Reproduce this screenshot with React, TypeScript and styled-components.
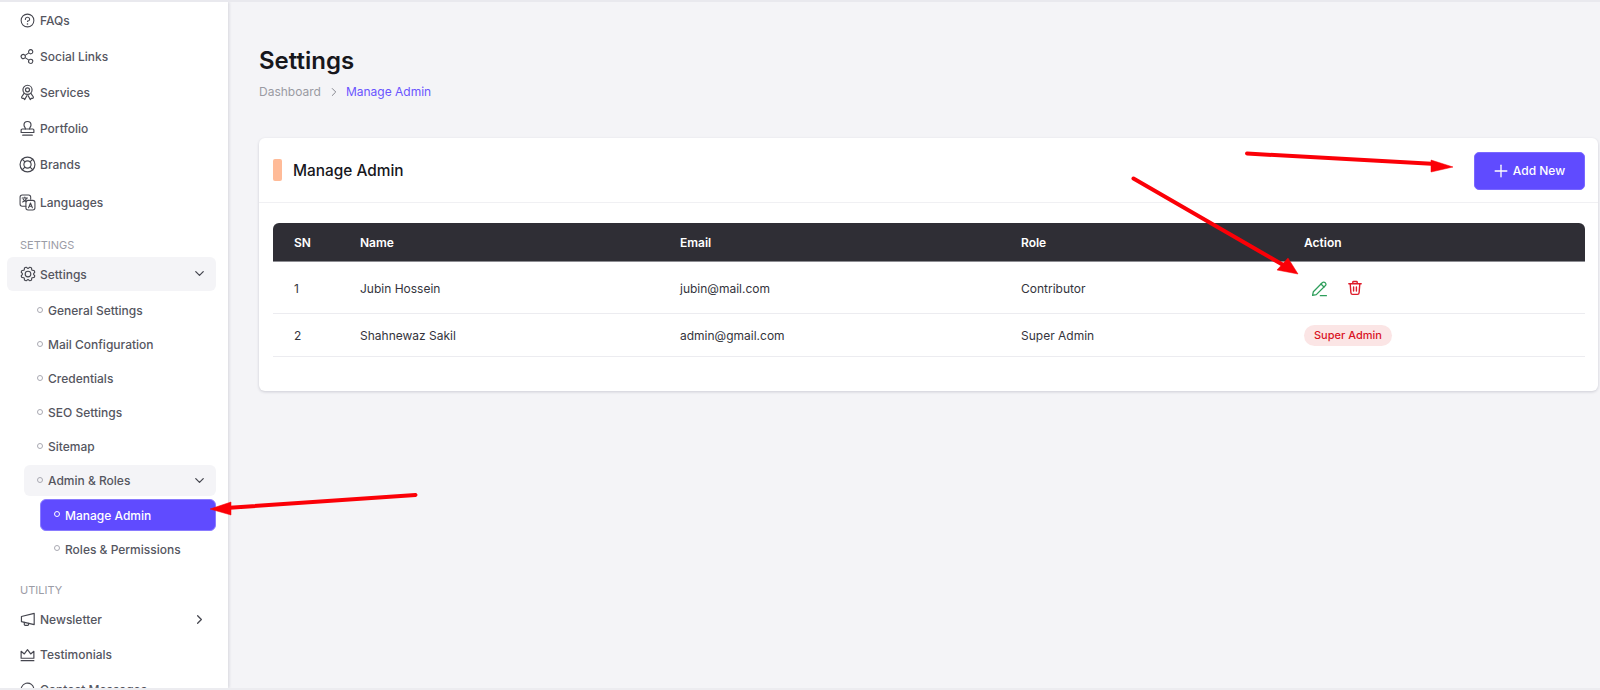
import React from "react";
import styled, { createGlobalStyle } from "styled-components";
import { ChevronDown, ChevronRight, Plus } from "lucide-react";
import { PiQuestion, PiShareNetwork, PiGear, PiChatCircleDots } from "react-icons/pi";

const Global = createGlobalStyle`
  html, body { margin: 0; padding: 0; height: 690px; overflow: hidden; background: #f4f4f7; }
  * { box-sizing: border-box; }
  body { font-family: Inter, "Noto Sans", sans-serif; }
`;

const Shell = styled.div`
  position: relative;
  display: flex;
  width: 1600px;
  height: 690px;
  overflow: hidden;
  border-top: 2px solid #e9e9ee;
  border-bottom: 2px solid #ececf0;
`;
const Sidebar = styled.aside`
  width: 228px;
  flex: none;
  background: #fff;
  box-shadow: 1px 0 3px rgba(30, 30, 60, 0.14);
  padding: 0 12px 0 7px;
  overflow: hidden;
  z-index: 1;
`;
const NavItem = styled.div<{ $h?: number; $pt?: number; $mt?: number }>`
  display: flex;
  align-items: center;
  height: ${(p) => p.$h ?? 36.2}px;
  margin-top: ${(p) => p.$mt ?? 0}px;
  padding: ${(p) => p.$pt ?? 0}px 9px 0 12px;
  gap: 4px;
  font-size: 12px;
  font-weight: 500;
  color: #55565f;
  svg { flex: none; }
`;
const OpenItem = styled(NavItem)`
  background: #f4f4f7;
  border-radius: 6px;
  height: 34px;
  margin-top: 5px;
  gap: 3px;
`;
const OpenLabel = styled.span`
  padding-top: 2px;
`;
const Grow = styled.span`
  flex: 1;
`;
const SectionTitle = styled.div<{ $mt: number }>`
  margin-top: ${(p) => p.$mt}px;
  padding-left: 13px;
  font-size: 11px;
  line-height: 14px;
  color: #9b9ca6;
`;
const SubList = styled.div<{ $ml: number; $mt?: number }>`
  margin-left: ${(p) => p.$ml}px;
  margin-top: ${(p) => p.$mt ?? 0}px;
  display: flex;
  flex-direction: column;
`;
const SubItem = styled.div`
  display: flex;
  align-items: center;
  gap: 5px;
  height: 34px;
  padding: 1px 0 0 13px;
  font-size: 12px;
  font-weight: 500;
  color: #55565f;
`;
const LastSubItem = styled(SubItem)`
  margin-top: 1px;
  padding-left: 14px;
`;
const SubOpen = styled(SubItem)`
  height: 31px;
  padding-right: 9px;
  background: #f4f4f7;
  border-radius: 6px;
`;
const SubActive = styled(SubItem)`
  height: 32px;
  background: #604bff;
  border: 1px solid #8a7bff;
  border-radius: 6px;
  color: #fff;
`;
const Dot = styled.i<{ $light?: boolean }>`
  width: 6px;
  height: 6px;
  flex: none;
  border-radius: 50%;
  border: 1px solid ${(p) => (p.$light ? "#fff" : "#a9a9b2")};
  margin-top: -2px;
`;
const Main = styled.main`
  flex: 1;
  min-width: 0;
  padding: 44px 2px 0 31px;
`;
const PageTitle = styled.h1`
  margin: 0;
  font-size: 24px;
  line-height: 30px;
  font-weight: 600;
  color: #17171c;
`;
const Crumbs = styled.div`
  display: flex;
  align-items: center;
  gap: 6px;
  margin-top: 7px;
  font-size: 12px;
  line-height: 18px;
  color: #9a9ba3;
`;
const CrumbNow = styled.span`
  color: #6a55ff;
  margin-left: -1px;
`;
const Card = styled.section`
  margin-top: 37px;
  height: 253px;
  background: #fff;
  border-radius: 6px;
  box-shadow: 0 1px 3px rgba(30, 30, 60, 0.18);
`;
const CardHead = styled.header`
  display: flex;
  align-items: center;
  height: 65px;
  padding: 0 13px 0 14px;
  border-bottom: 1px solid #f0f0f3;
`;
const Marker = styled.span`
  width: 9px;
  height: 22px;
  background: #ffbb98;
  border-radius: 2px;
  margin-right: 11px;
`;
const CardTitle = styled.h2`
  margin: 0;
  flex: 1;
  font-size: 15.4px;
  font-weight: 500;
  color: #17171c;
`;
const AddButton = styled.button`
  display: flex;
  align-items: center;
  justify-content: center;
  gap: 2px;
  width: 111px;
  height: 38px;
  margin-top: 1px;
  padding: 0 3px 0 0;
  border: 1px solid #7a68ff;
  border-radius: 5px;
  background: #604bff;
  color: #fff;
  font: 500 12px Inter, sans-serif;
`;
const TableWrap = styled.div`
  margin: 20px 13px 0 14px;
`;
const Row = styled.div<{ $h: number }>`
  display: grid;
  grid-template-columns: 66px 320px 341px 283px 1fr;
  align-items: center;
  height: ${(p) => p.$h}px;
  padding: 1px 0 0 21px;
  font-size: 12px;
  color: #34343c;
  border-bottom: 1px solid #ececf0;
`;
const HeadRow = styled(Row)`
  background: #2f2e35;
  color: #fff;
  font-weight: 600;
  border-radius: 6px 6px 0 0;
  border-bottom: 1px solid #8c8c92;
`;
const Actions = styled.div`
  display: flex;
  align-items: center;
  gap: 19px;
  padding-left: 7px;
`;
const Pill = styled.span`
  justify-self: start;
  padding: 0 10px;
  height: 21px;
  line-height: 21px;
  border-radius: 11px;
  background: #fbe5e5;
  color: #d9121f;
  font-size: 11px;
  font-weight: 500;
`;
const ArrowLayer = styled.svg`
  position: absolute;
  left: 0;
  top: -2px;
  width: 1600px;
  height: 690px;
  pointer-events: none;
  z-index: 5;
`;

const Line: React.FC<{ children: React.ReactNode; color?: string; w?: number }> = ({ children, color = "#45464f", w = 1.1 }) => (
  <svg width="17" height="17" viewBox="0 0 16 16" fill="none" stroke={color} strokeWidth={w} strokeLinecap="round" strokeLinejoin="round">
    {children}
  </svg>
);

const LangIcon = () => (
  <Line w={1}>
    <path d="M6.500 11.500H3a2 2 0 0 1-2-2V3a2 2 0 0 1 2-2h6a2 2 0 0 1 2 2v2" />
    <path d="M3 3.800h5M5.500 2.800v1M7 3.800c-.3 1.600-1.600 3-3.600 3.800M4 5c.5 1 1.500 1.800 3 2.300" />
    <rect x="6.500" y="6" width="8.500" height="9" rx="2" />
    <path d="M9 13l1.800-4.500L12.600 13M9.600 11.600h2.400" />
  </Line>
);
const BadgeIcon = () => (
  <Line>
    <circle cx="8" cy="5.500" r="4.300" />
    <circle cx="8" cy="5.500" r="1.900" />
    <path d="M4.800 8.800 2.600 12a1 1 0 0 0 .9 1.500h1l.8 1.200L7.400 11M11.200 8.800l2.200 3.200a1 1 0 0 1-.9 1.500h-1l-.8 1.200L8.600 11" />
  </Line>
);
const StampIcon = () => (
  <Line>
    <path d="M6 8.500c.2-1.500-1.300-2-1.300-3.800a3.300 3.300 0 0 1 6.600 0c0 1.800-1.500 2.300-1.300 3.800" />
    <path d="M3 8.500h10a1 1 0 0 1 1 1v2.300H2V9.500a1 1 0 0 1 1-1Z" />
    <path d="M3.500 14.300h9" />
  </Line>
);
const BuoyIcon = () => (
  <Line>
    <circle cx="8" cy="8" r="7" />
    <circle cx="8" cy="8" r="3.400" />
    <path d="M3 3l2.600 2.600M13 3l-2.600 2.600M3 13l2.600-2.600M13 13l-2.600-2.600" />
  </Line>
);
const MegaphoneIcon = () => (
  <Line>
    <path d="M14.300 2.200v10.600L2.300 10V5.200Z" />
    <path d="M5 10.700v2.100a.8.800 0 0 0 .8.800h2.400a.8.800 0 0 0 .8-.8v-1.200" />
  </Line>
);
const CrownIcon = () => (
  <Line>
    <path d="M2 5l3 2.500L8 3.500l3 4L14 5v6.500H2Z" />
    <path d="M2 13.800h12" />
  </Line>
);
const PencilIcon = () => (
  <Line color="#2e9e5b" w={1.2}>
    <path d="M1.500 14.500l.7-3.500 8.600-8.600a1.600 1.600 0 0 1 2.300 0l.5.500a1.600 1.600 0 0 1 0 2.300L5 13.800Z" />
    <path d="M9.400 3.800l2.800 2.800M8.800 14.800h5.700" />
  </Line>
);
const TrashIcon = () => (
  <svg width="16" height="16" viewBox="0 0 16 16" fill="none" stroke="#de1b2a" strokeWidth="1.400" strokeLinecap="round" strokeLinejoin="round">
    <path d="M1.800 3.800h12.400M5.800 3.500V2.200a.7.700 0 0 1 .7-.7h3a.7.700 0 0 1 .7.700v1.300" />
    <path d="M3.200 3.800l.7 9a1.700 1.700 0 0 0 1.700 1.600h4.800a1.700 1.700 0 0 0 1.700-1.600l.7-9" />
    <path d="M6.600 7v4M9.400 7v4" />
  </svg>
);

const ic = { size: 17, color: "#45464f" };
const chev = { size: 15, strokeWidth: 2, color: "#45464f" };

export default function App() {
  return (
    <Shell>
      <Global />
      <Sidebar>
        <NavItem><PiQuestion {...ic} />FAQs</NavItem>
        <NavItem><PiShareNetwork {...ic} />Social Links</NavItem>
        <NavItem><BadgeIcon />Services</NavItem>
        <NavItem><StampIcon />Portfolio</NavItem>
        <NavItem><BuoyIcon />Brands</NavItem>
        <NavItem $h={38} $pt={2}><LangIcon />Languages</NavItem>
        <SectionTitle $mt={17}>SETTINGS</SectionTitle>
        <OpenItem>
          <PiGear {...ic} size={18} /><OpenLabel>Settings</OpenLabel><Grow /><ChevronDown {...chev} />
        </OpenItem>
        <SubList $ml={17} $mt={2.5}>
          <SubItem><Dot />General Settings</SubItem>
          <SubItem><Dot />Mail Configuration</SubItem>
          <SubItem><Dot />Credentials</SubItem>
          <SubItem><Dot />SEO Settings</SubItem>
          <SubItem><Dot />Sitemap</SubItem>
        </SubList>
        <SubList $ml={17} $mt={1.5}>
          <SubOpen><Dot />Admin &amp; Roles<Grow /><ChevronDown {...chev} /></SubOpen>
        </SubList>
        <SubList $ml={33} $mt={3}>
          <SubActive><Dot $light />Manage Admin</SubActive>
          <LastSubItem><Dot />Roles &amp; Permissions</LastSubItem>
        </SubList>
        <SectionTitle $mt={17}>UTILITY</SectionTitle>
        <NavItem $h={36} $mt={4} $pt={1}>
          <MegaphoneIcon />Newsletter<Grow /><ChevronRight {...chev} />
        </NavItem>
        <NavItem $h={35}><CrownIcon />Testimonials</NavItem>
        <NavItem $h={35}><PiChatCircleDots {...ic} />Contact Messages</NavItem>
      </Sidebar>
      <Main>
        <PageTitle>Settings</PageTitle>
        <Crumbs>
          <span>Dashboard</span>
          <ChevronRight size={14} strokeWidth={1.700} color="#85868e" />
          <CrumbNow>Manage Admin</CrumbNow>
        </Crumbs>
        <Card>
          <CardHead>
            <Marker />
            <CardTitle>Manage Admin</CardTitle>
            <AddButton><Plus size={20} strokeWidth={1.600} />Add New</AddButton>
          </CardHead>
          <TableWrap>
            <HeadRow $h={39}>
              <span>SN</span><span>Name</span><span>Email</span><span>Role</span><span>Action</span>
            </HeadRow>
            <Row $h={52}>
              <span>1</span><span>Jubin Hossein</span><span>jubin@mail.com</span><span>Contributor</span>
              <Actions>
                <PencilIcon />
                <TrashIcon />
              </Actions>
            </Row>
            <Row $h={43}>
              <span>2</span><span>Shahnewaz Sakil</span><span>admin@gmail.com</span><span>Super Admin</span>
              <Pill>Super Admin</Pill>
            </Row>
          </TableWrap>
        </Card>
      </Main>
      <ArrowLayer viewBox="0 0 1600 690">
        <g fill="#fb0007" stroke="#fb0007" strokeLinejoin="round">
          <path d="M1247 153.500 1436 164" strokeWidth="4" strokeLinecap="round" />
          <path d="M1431 160 1453 167 1431 172Z" strokeWidth="0.500" />
          <path d="M1133.500 178.500 1285 266" strokeWidth="4" strokeLinecap="round" />
          <path d="M1288 258 1298 274 1277 270Z" strokeWidth="0.500" />
          <path d="M415.500 495 226 508" strokeWidth="4" strokeLinecap="round" />
          <path d="M231 502 210 509 231 515Z" strokeWidth="0.500" />
        </g>
      </ArrowLayer>
    </Shell>
  );
}
